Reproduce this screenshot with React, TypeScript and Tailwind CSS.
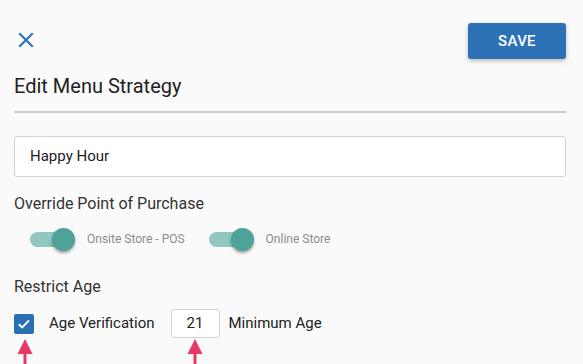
import React from "react";

const Toggle = ({ label }: { label: string }) => (
  <div className="flex items-center">
    <div className="relative w-[45px] h-[23px]">
      <div className="absolute left-0 top-[4px] w-[40px] h-[15px] rounded-full bg-[#91c7bf]" />
      <div className="absolute left-[22px] top-0 w-[23px] h-[23px] rounded-full bg-[#4ea398] shadow-[0_2px_3px_rgba(0,0,0,0.35)]" />
    </div>
    <span className="ml-[12px] text-[12px] text-[#8c8c8c]">{label}</span>
  </div>
);

const Arrow = ({ className }: { className: string }) => (
  <svg
    className={`absolute pointer-events-none ${className}`}
    width="16"
    height="30"
    viewBox="0 0 16 30"
  >
    <polygon points="8,0 15.5,15 0.5,15" fill="#e63a65" />
    <rect x="6.5" y="14" width="3" height="16" fill="#e63a65" />
  </svg>
);

export default function App() {
  return (
    <div
      className="h-[364px] overflow-hidden bg-[#fafafa] pl-[14px] pr-[17px] pt-[23px] text-[#333333]"
      style={{ fontFamily: "Roboto, 'Noto Sans', sans-serif" }}
    >
      <div className="flex justify-between items-start">
        <button className="mt-[8px] ml-[3px] text-[#2f73b8]">
          <svg width="18" height="18" viewBox="0 0 18 18">
            <path
              d="M3 3 L15 15 M15 3 L3 15"
              stroke="currentColor"
              strokeWidth="2.2"
              strokeLinecap="square"
            />
          </svg>
        </button>
        <button className="w-[98px] h-[36px] rounded-[3px] bg-[#2d71b6] text-white text-[15px] font-medium tracking-[0.3px] shadow-[0_2px_4px_rgba(0,0,0,0.25)]">
          SAVE
        </button>
      </div>

      <h1 className="mt-[13px] text-[20px] leading-[28px] text-[#222222]">
        Edit Menu Strategy
      </h1>
      <div className="mt-[11px] h-[2px] bg-[#cccccc]" />

      <div className="mt-[23px] h-[41px] rounded-[3px] border border-[#d3d3d3] bg-white flex items-center pl-[15px] text-[15px] text-[#222222]">
        Happy Hour
      </div>

      <div className="mt-[15px] text-[16px] leading-[24px]">
        Override Point of Purchase
      </div>
      <div className="mt-[8px] h-[30px] flex items-center pl-[16px] gap-[24px]">
        <Toggle label="Onsite Store - POS" />
        <Toggle label="Online Store" />
      </div>

      <div className="mt-[21px] text-[16px] leading-[24px]">Restrict Age</div>
      <div className="mt-[10px] h-[29px] flex items-center text-[15px] text-[#222222]">
        <div className="relative">
          <div className="w-[20px] h-[20px] rounded-[2px] bg-[#2c6eb3] flex items-center justify-center">
            <svg width="16" height="16" viewBox="0 0 16 16">
              <path
                d="M2.8 8.2 L6.2 11.4 L13 4.4"
                stroke="white"
                strokeWidth="2"
                fill="none"
              />
            </svg>
          </div>
          <Arrow className="top-[25px] left-[2.5px]" />
        </div>
        <span className="ml-[15px]">Age Verification</span>
        <div className="relative ml-[16px]">
          <div className="w-[49px] h-[29px] rounded-[3px] border border-[#d3d3d3] bg-white flex items-center justify-center">
            21
          </div>
          <Arrow className="top-[30px] left-[16.5px]" />
        </div>
        <span className="ml-[9px]">Minimum Age</span>
      </div>
    </div>
  );
}
